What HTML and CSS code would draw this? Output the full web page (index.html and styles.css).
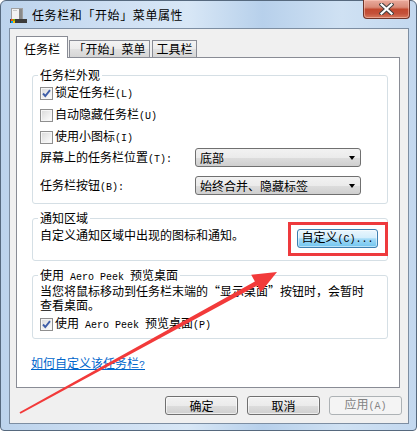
FILE: index.html
```html
<!DOCTYPE html>
<html lang="zh-CN">
<head>
<meta charset="utf-8">
<title>任务栏和「开始」菜单属性</title>
<link rel="stylesheet" href="styles.css">
</head>
<body>
<div class="window">
  <div class="titlebar">
    <svg class="app-icon" width="17" height="18" viewBox="0 0 17 18">
      <rect x="1.5" y="1.5" width="11" height="11" fill="#f2f2f2" stroke="#a0a0a0"/>
      <rect x="9" y="2" width="3" height="10" fill="#8a8a8a"/>
      <rect x="3" y="3" width="4" height="1" fill="#c8c8c8"/>
      <rect x="0" y="12" width="17" height="4" fill="#3b3b3b"/>
      <rect x="1" y="12" width="2" height="2" fill="#f25022"/>
      <rect x="3" y="12" width="2" height="2" fill="#7fba00"/>
      <rect x="1" y="14" width="2" height="2" fill="#00a4ef"/>
      <rect x="3" y="14" width="2" height="2" fill="#ffb900"/>
    </svg>
    <span class="title">任务栏和「开始」菜单属性</span>
    <div class="close">
      <svg width="15" height="12" viewBox="0 0 15 12">
        <path d="M2.5 1.5 L12.5 10.5 M12.5 1.5 L2.5 10.5" stroke="#3f3f3f" stroke-width="4.2" stroke-linecap="square"/>
        <path d="M2.5 1.5 L12.5 10.5 M12.5 1.5 L2.5 10.5" stroke="#ffffff" stroke-width="2.2" stroke-linecap="square"/>
      </svg>
    </div>
  </div>

  <div class="client">
    <div class="tabs">
      <div class="tab active tab-1">任务栏</div>
      <div class="tab tab-2">「开始」菜单</div>
      <div class="tab tab-3">工具栏</div>
    </div>

    <div class="panel">
      <fieldset class="group group-look">
        <legend>任务栏外观</legend>
        <div class="check row-a"><span class="cb checked"><svg width="11" height="11" viewBox="0 0 11 11"><path d="M2 5.5 L4.3 8 L9 2.2" fill="none" stroke="#3f5ea8" stroke-width="1.9"/></svg></span><span class="check-label">锁定任务栏<span class="m">(L)</span></span></div>
        <div class="check row-b"><span class="cb"></span><span class="check-label">自动隐藏任务栏<span class="m">(U)</span></span></div>
        <div class="check row-c"><span class="cb"></span><span class="check-label">使用小图标<span class="m">(I)</span></span></div>
        <div class="field">
          <span class="field-label">屏幕上的任务栏位置<span class="m">(T):</span></span>
          <div class="select"><span class="select-value">底部</span><span class="arrow"></span></div>
        </div>
        <div class="field field-2">
          <span class="field-label">任务栏按钮<span class="m">(B):</span></span>
          <div class="select"><span class="select-value">始终合并、隐藏标签</span><span class="arrow"></span></div>
        </div>
      </fieldset>

      <fieldset class="group group-notify">
        <legend>通知区域</legend>
        <div class="notify-row">
          <span class="notify-text">自定义通知区域中出现的图标和通知。</span>
          <div class="btn-wrap">
            <div class="btn btn-hot"><span>自定义<span class="m">(C)...</span></span></div>
            <div class="red-box"></div>
          </div>
        </div>
      </fieldset>

      <fieldset class="group group-peek">
        <legend>使用<span class="m"> Aero Peek </span>预览桌面</legend>
        <p class="peek-text">当您将鼠标移动到任务栏末端的“显示桌面”按钮时，会暂时<br>查看桌面。</p>
        <div class="check row-peek"><span class="cb checked"><svg width="11" height="11" viewBox="0 0 11 11"><path d="M2 5.5 L4.3 8 L9 2.2" fill="none" stroke="#3f5ea8" stroke-width="1.9"/></svg></span><span class="check-label">使用<span class="m"> Aero Peek </span>预览桌面<span class="m">(P)</span></span></div>
      </fieldset>

      <a class="help-link" href="#">如何自定义该任务栏<span class="m">?</span></a>
    </div>

    <div class="buttons">
      <div class="btn"><span>确定</span></div>
      <div class="btn"><span>取消</span></div>
      <div class="btn btn-disabled"><span>应用<span class="m">(A)</span></span></div>
    </div>
  </div>

  <svg class="annot-arrow" width="417" height="431" viewBox="0 0 417 431">
    <polygon fill="#f23a3a" points="19.5,412.2 254.9,281.4 251.2,274.7 277,272 260.8,292.3 257.3,285.6 20.5,413.8"/>
  </svg>
</div>
</body>
</html>
```

FILE: styles.css
```css
* { box-sizing: border-box; }

html, body {
  margin: 0;
  padding: 0;
}

body {
  width: 417px;
  height: 431px;
  overflow: hidden;
  background: #ffffff;
  font-family: "Noto Sans CJK SC", "Noto Sans", sans-serif;
  font-size: 12px;
  line-height: 14px;
  color: #000;
}

.m {
  font-family: "Liberation Mono", "DejaVu Sans Mono", monospace;
  font-size: 10px;
}

.window {
  position: relative;
  width: 417px;
  height: 431px;
  border: 1px solid #56697e;
  border-radius: 6px 6px 4px 4px;
  background: linear-gradient(to right, #bcd3ec 0%, #cfe0f3 28%, #d8e7f6 45%, #b7d0eb 63%, #cfe1f3 82%, #c3d8ef 100%);
  display: flex;
  flex-direction: column;
  padding: 0 7px 6px 8px;
}

.titlebar {
  height: 27px;
  display: flex;
  align-items: center;
}

.app-icon {
  margin-left: 1px;
  margin-top: 2px;
  flex: none;
}

.title {
  margin-left: 5px;
  font-size: 12px;
  letter-spacing: 0.6px;
  color: #000;
}

.close {
  margin-left: auto;
  margin-right: -1px;
  align-self: flex-start;
  margin-top: -1px;
  width: 47px;
  height: 19px;
  border: 1px solid #6e3429;
  border-top: none;
  border-radius: 0 0 4px 4px;
  background: linear-gradient(#e9ab9d 0%, #d98b78 40%, #c2492f 52%, #c4513a 75%, #d67a5e 100%);
  box-shadow: inset 0 0 0 1px rgba(255, 210, 195, 0.5);
  display: flex;
  align-items: center;
  justify-content: center;
}

.client {
  flex: 1;
  border: 1px solid #7d8ea2;
  background: #f0f0f0;
  padding: 7px 8px 0 6px;
  display: flex;
  flex-direction: column;
}

.tabs {
  height: 21px;
  display: flex;
  align-items: flex-end;
}

.tab {
  border: 1px solid #898c95;
  border-bottom: none;
  text-align: center;
  white-space: nowrap;
}

.tab-1 { width: 52px; }
.tab-2 { width: 81px; margin-left: 1px; }
.tab-3 { width: 45px; margin-left: 2px; }

.tab:not(.active) {
  height: 17px;
  padding-top: 1px;
  background: linear-gradient(#f3f3f3 0%, #ebebeb 50%, #e1e1e1 51%, #d6d6d6 100%);
}

.tab.active {
  position: relative;
  z-index: 1;
  height: 22px;
  margin-bottom: -1px;
  padding-top: 5px;
  background: #ffffff;
}

.panel {
  height: 331px;
  flex: none;
  border: 1px solid #898c95;
  background: #ffffff;
  display: flex;
  flex-direction: column;
}

.group {
  margin: 0 11px 0 15px;
  min-inline-size: 0;
  border: 1px solid #d5dfe5;
  border-radius: 3px;
  padding: 0 8px 0 7px;
}

.group legend {
  padding: 0 2px;
  margin-left: -2px;
  line-height: 14px;
  height: 14px;
  white-space: pre;
}

.group-look {
  margin-top: 10px;
  padding-top: 1px;
  padding-bottom: 8px;
}

.check {
  display: flex;
  align-items: center;
}

.check-label {
  white-space: pre;
}

.row-a { height: 21px; }
.row-b { height: 23px; }
.row-c { height: 21px; }

.cb {
  width: 13px;
  height: 13px;
  margin-right: 2px;
  flex: none;
  border: 1px solid #8f8f8f;
  background: linear-gradient(135deg, #d9d9d9 0%, #f0f0f0 60%, #ffffff 100%);
  box-shadow: inset 0 0 0 1px #f6f6f6;
  display: flex;
  align-items: center;
  justify-content: center;
}

.field {
  height: 19px;
  display: flex;
  align-items: center;
}

.field-2 { margin-top: 9px; }

.field-label {
  width: 155px;
  flex: none;
  padding-top: 2px;
  white-space: nowrap;
}

.select {
  width: 166px;
  height: 19px;
  border: 1px solid #707070;
  border-radius: 3px;
  background: linear-gradient(#f2f2f2 0%, #ebebeb 50%, #dddddd 51%, #cfcfcf 100%);
  display: flex;
  align-items: center;
  padding-left: 4px;
}

.select-value {
  white-space: nowrap;
}

.arrow {
  margin-left: auto;
  margin-right: 5px;
  width: 0;
  height: 0;
  border-left: 3.5px solid transparent;
  border-right: 3.5px solid transparent;
  border-top: 4px solid #000;
}

.group-notify {
  margin-top: 7px;
  padding-top: 3px;
  padding-bottom: 12px;
}

.notify-row {
  display: flex;
  align-items: flex-start;
  justify-content: space-between;
  margin-right: 1px;
}

.notify-text {
  white-space: nowrap;
}

.btn-wrap {
  position: relative;
  margin-top: 1px;
}

.btn {
  width: 73px;
  height: 19px;
  border: 1px solid #707070;
  border-radius: 3px;
  background: linear-gradient(#f2f2f2 0%, #ebebeb 50%, #dddddd 51%, #cfcfcf 100%);
  box-shadow: inset 0 0 0 1px rgba(255, 255, 255, 0.6);
  display: flex;
  align-items: center;
  justify-content: center;
  white-space: nowrap;
}

.btn-hot {
  width: 81px;
  border-color: #3c7fb1;
  background: linear-gradient(#eaf6fd 0%, #d4eefc 45%, #a4dbf7 52%, #6fc5ef 100%);
  box-shadow: inset 0 0 0 1px rgba(255, 255, 255, 0.5);
}

.red-box {
  position: absolute;
  top: -7px;
  left: -9px;
  right: -10px;
  bottom: -8px;
  border: 3px solid #ee3a3d;
}

.group-peek {
  margin-top: 7px;
  padding-top: 2px;
  padding-bottom: 6px;
}

.peek-text {
  margin: 0;
  white-space: nowrap;
}

.row-peek {
  margin-top: 5px;
  height: 15px;
}

.help-link {
  margin: 17px 0 0 14px;
  align-self: flex-start;
  color: #0066cc;
  text-decoration: underline;
  white-space: nowrap;
}

.buttons {
  margin-top: 8px;
  margin-right: -2px;
  display: flex;
  justify-content: flex-end;
  gap: 9px;
}

.btn-disabled {
  border-color: #adb2b5;
  background: #f4f4f4;
  box-shadow: none;
  color: #838383;
}

.annot-arrow {
  position: absolute;
  top: -1px;
  left: -1px;
  pointer-events: none;
}
```
